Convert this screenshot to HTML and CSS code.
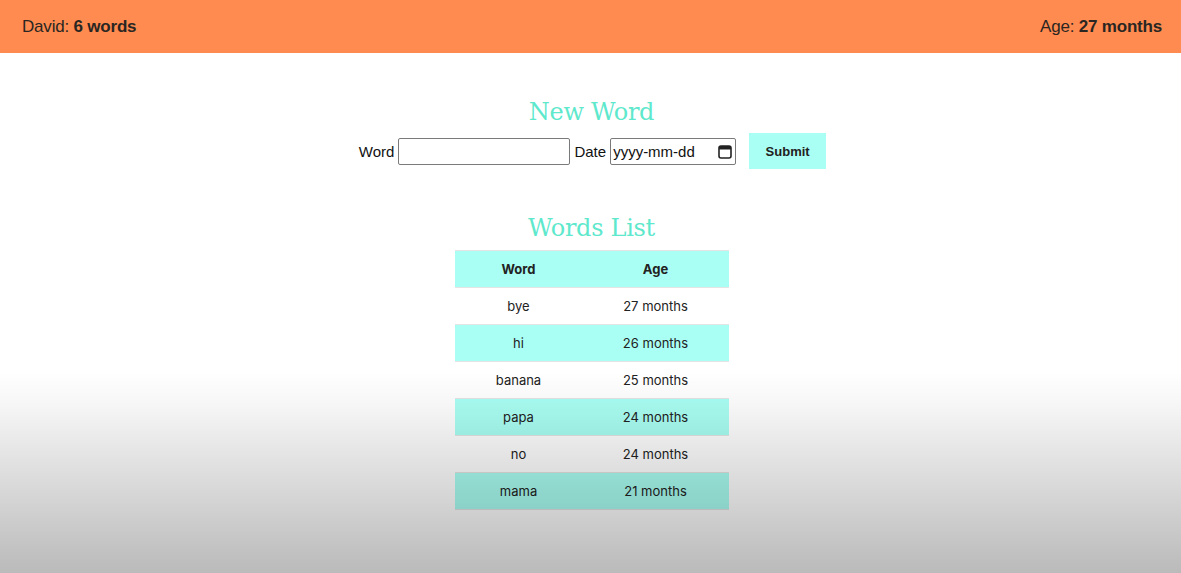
FILE: index.html
```html
<!DOCTYPE html>
<html>
<head>
<meta charset="utf-8">
<link rel="stylesheet" href="styles.css">
</head>
<body>
<header class="topbar">
  <div class="stat">David: <b>6 words</b></div>
  <div class="stat">Age: <b>27 months</b></div>
</header>
<main class="content">
  <h2 class="title">New Word</h2>
  <form class="word-form">
    <label class="lbl">Word</label>
    <input class="text-input" type="text">
    <label class="lbl">Date</label>
    <div class="date-input"><span class="date-ph">yyyy-mm-dd</span>
      <svg class="cal" width="14" height="15" viewBox="0 0 14 15"><rect x="1" y="2" width="12" height="12" rx="2" fill="none" stroke="#222" stroke-width="1.6"/><rect x="1" y="2" width="12" height="3.5" rx="1" fill="#222"/></svg>
    </div>
    <button class="submit" type="button">Submit</button>
  </form>
  <h2 class="title list-title">Words List</h2>
  <table class="words">
    <thead><tr><th class="c1">Word</th><th class="c2">Age</th></tr></thead>
    <tbody>
      <tr><td>bye</td><td>27 months</td></tr>
      <tr class="alt"><td>hi</td><td>26 months</td></tr>
      <tr><td>banana</td><td>25 months</td></tr>
      <tr class="alt"><td>papa</td><td>24 months</td></tr>
      <tr><td>no</td><td>24 months</td></tr>
      <tr class="alt"><td>mama</td><td>21 months</td></tr>
    </tbody>
  </table>
</main>
<div class="shade"></div>
</body>
</html>
```
FILE: styles.css
```css
html, body { margin: 0; padding: 0; background: #fff; }
body { font-family: "Liberation Sans", Arial, sans-serif; color: #222; }
.topbar {
  height: 53px;
  background: #ff8b50;
  display: flex;
  justify-content: space-between;
  align-items: center;
  padding: 0 19px 0 22px;
  box-sizing: border-box;
}
.stat { font-size: 17px; font-weight: 300; color: #2a2622; letter-spacing: -0.2px; }
.stat b { font-weight: 700; }
.content { display: flex; flex-direction: column; align-items: center; }
.title {
  font-family: "DejaVu Serif", Georgia, serif;
  font-weight: 400;
  font-size: 24px;
  color: #5ee8cc;
  margin: 44px 0 0 2px;
  line-height: 30px;
  letter-spacing: -0.3px;
}
.list-title { margin-top: 44px; }
.word-form {
  display: flex;
  align-items: center;
  margin-top: 6px;
  margin-left: 4px;
  font-size: 15px;
}
.lbl { color: #111; margin-right: 4px; }
.text-input {
  width: 172px; height: 27px; box-sizing: border-box;
  border: 1px solid #7a7a7a; border-radius: 2px; margin: 0 4px 0 0; padding: 0;
}
.date-input {
  width: 126px; height: 27px; box-sizing: border-box;
  border: 1px solid #7a7a7a; border-radius: 2px;
  display: flex; align-items: center; justify-content: space-between;
  padding: 0 3px 0 2px; font-size: 15px; color: #111;
}
.cal { display: block; }
.submit {
  margin-left: 13px;
  width: 77px; height: 36px;
  background: #aafff4; border: none;
  font-family: "Liberation Sans", Arial, sans-serif;
  font-weight: 700; font-size: 13px; color: #222;
}
.words {
  margin: 7px 0 0 2px;
  border-collapse: collapse;
  width: 274px;
  font-family: Inter, "Liberation Sans", sans-serif;
  font-size: 13px;
  color: #222;
}
.words th, .words td {
  height: 36px; padding: 0; text-align: center;
  border-top: 1px solid #e4e4e4;
}
.words tr:last-child td { border-bottom: 1px solid #e4e4e4; }
.words th { background: #aafff4; font-weight: 700; }
.c1 { width: 128px; }
.c2 { width: 146px; }
.alt td { background: #aafff4; }
.shade {
  position: fixed; left: 0; right: 0; top: 0; bottom: 0;
  pointer-events: none;
  background: linear-gradient(to bottom, rgba(0,0,0,0) 0px, rgba(0,0,0,0) 372px, rgba(0,0,0,0.03) 402px, rgba(0,0,0,0.27) 573px);
}
```
